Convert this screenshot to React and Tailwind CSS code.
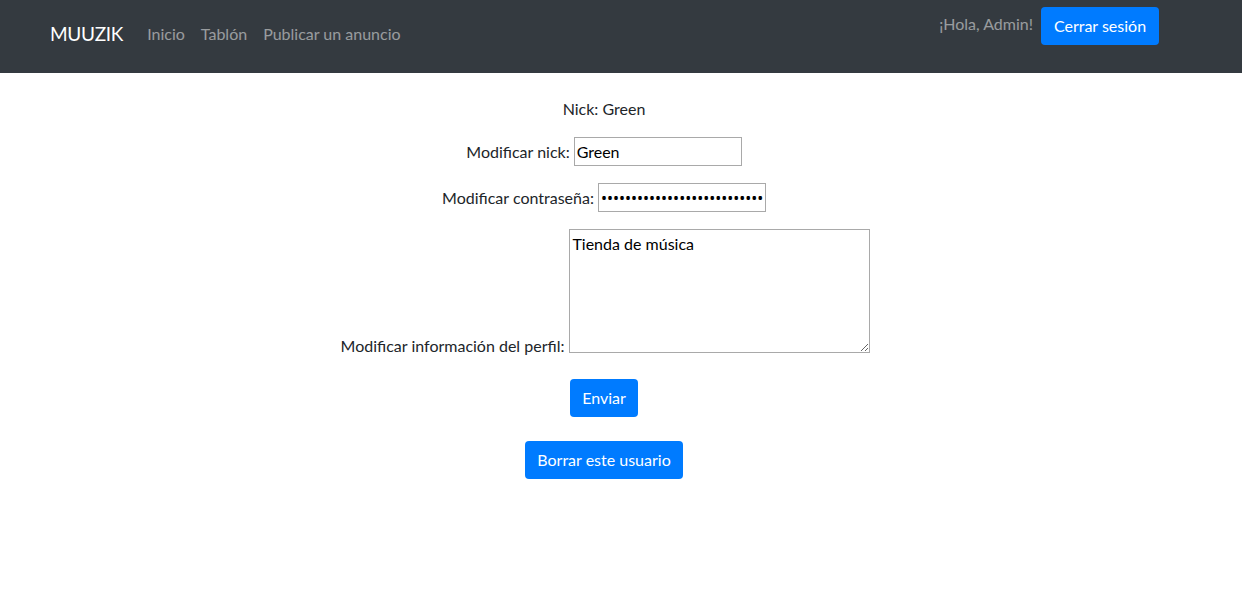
import React from "react";

export default function App() {
  return (
    <div className="min-h-[594px] bg-white text-[#212529] text-[16px] leading-6" style={{ fontFamily: "'Segoe UI', Lato, 'Liberation Sans', sans-serif" }}>
      <nav className="flex justify-between bg-[#343a40] h-[73px] pl-[50px] pr-[83px]">
        <div className="flex items-center pb-[5px]">
          <a className="text-white text-[19px] leading-[30px] tracking-[-0.3px] mr-4" href="#">MUUZIK</a>
          <a className="text-white/50 px-2" href="#">Inicio</a>
          <a className="text-white/50 px-2" href="#">Tablón</a>
          <a className="text-white/50 px-2" href="#">Publicar un anuncio</a>
        </div>
        <div className="flex items-start pt-[7px] gap-2">
          <span className="text-white/50 mt-[5px]">¡Hola, Admin!</span>
          <button className="bg-[#007bff] text-white rounded w-[118px] h-[38px]">Cerrar sesión</button>
        </div>
      </nav>

      <div className="w-[1208px] flex flex-col items-center">
        <p className="mt-6">Nick: Green</p>

        <div className="flex items-center mt-4">
          <label className="mr-1">Modificar nick:</label>
          <input className="w-[168px] h-[29px] border border-[#a9a9a9] px-[2px] text-black" defaultValue="Green" />
        </div>

        <div className="flex items-center mt-[17px]">
          <label className="mr-1">Modificar contraseña:</label>
          <input type="password" className="w-[168px] h-[29px] border border-[#a9a9a9] px-[2px] text-black" style={{ fontFamily: "'Noto Sans', sans-serif" }} defaultValue="abcdefghijklmnopqrstuvwxyz0" />
        </div>

        <div className="flex items-end mt-[17px] pl-[3px]">
          <label className="mr-[5px] mb-[-5px]">Modificar información del perfil:</label>
          <textarea className="w-[301px] h-[124px] border border-[#a9a9a9] px-[2px] py-[2px] text-black" defaultValue="Tienda de música" />
        </div>

        <button className="mt-[26px] bg-[#007bff] text-white rounded w-[68px] h-[38px]">Enviar</button>
        <button className="mt-6 bg-[#007bff] text-white rounded w-[158px] h-[38px]">Borrar este usuario</button>
      </div>
    </div>
  );
}
